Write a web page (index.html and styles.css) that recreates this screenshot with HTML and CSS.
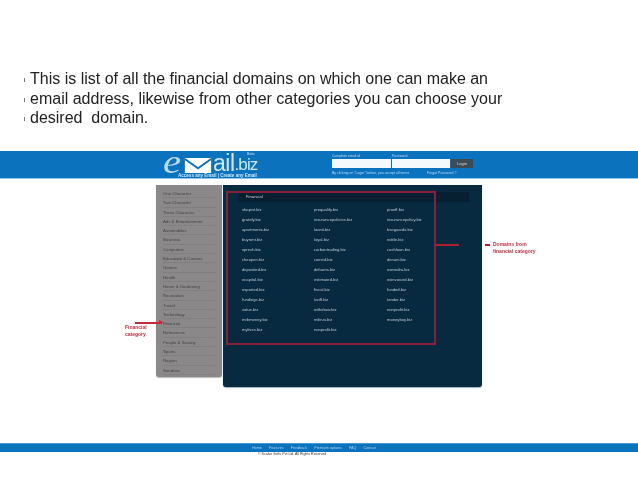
FILE: index.html
```html
<!DOCTYPE html>
<html lang="en">
<head>
<meta charset="utf-8">
<title>Financial domains</title>
<link rel="stylesheet" href="styles.css">
</head>
<body>
<main class="slide">
  <ul class="bullets">
    <li>This is list of all the financial domains on which one can make an</li>
    <li>email address, likewise from other categories you can choose your</li>
    <li>desired&nbsp; domain.</li>
  </ul>

  <section class="shot">
    <header class="site-header">
      <div class="header-inner">
        <div class="logo">
          <div class="logo-mark">
            <span class="logo-e">e</span>
            <svg class="logo-env" viewBox="0 0 28 16" aria-hidden="true">
              <rect width="28" height="16" fill="#fff"/>
              <path d="M0 1 L14 11 L28 1" fill="none" stroke="#0b72bd" stroke-width="2"/>
            </svg>
            <span class="logo-ail">ail</span><span class="logo-biz">.biz</span>
            <span class="logo-beta">Beta</span>
          </div>
          <div class="logo-tag">Access any Email | Create any Email</div>
        </div>
        <div class="login">
          <div class="login-labels"><span>Complete email id</span><span>Password</span></div>
          <div class="login-row">
            <div class="field"></div>
            <div class="field"></div>
            <div class="login-btn">Login</div>
          </div>
          <div class="login-notes"><span>By clicking on "Login" button, you accept all terms</span><span>Forgot Password ?</span></div>
        </div>
      </div>
    </header>

    <div class="content">
      <nav class="sidebar">
        <div class="cat">One Character</div>
        <div class="cat">Two Character</div>
        <div class="cat">Three Character</div>
        <div class="cat">Ads &amp; Entertainment</div>
        <div class="cat">Automobiles</div>
        <div class="cat">Business</div>
        <div class="cat">Computers</div>
        <div class="cat">Education &amp; Careers</div>
        <div class="cat">Games</div>
        <div class="cat">Health</div>
        <div class="cat">Home &amp; Gardening</div>
        <div class="cat">Recreation</div>
        <div class="cat">Travel</div>
        <div class="cat">Technology</div>
        <div class="cat">Financial</div>
        <div class="cat">References</div>
        <div class="cat">People &amp; Society</div>
        <div class="cat">Sports</div>
        <div class="cat">Region</div>
        <div class="cat">Sundries</div>
      </nav>
      <div class="panel">
        <div class="panel-title">Financial</div>
        <div class="domains">
          <span>shopist.biz</span><span>prequalify.biz</span><span>proeff.biz</span>
          <span>gratefy.biz</span><span>insurancepolicies.biz</span><span>insurancepolicy.biz</span>
          <span>apartments.biz</span><span>loanit.biz</span><span>bsoguards.biz</span>
          <span>buyrent.biz</span><span>loyal.biz</span><span>noble.biz</span>
          <span>spresh.biz</span><span>carbontrading.biz</span><span>cashloan.biz</span>
          <span>cheapen.biz</span><span>coined.biz</span><span>denarii.biz</span>
          <span>deposited.biz</span><span>dehams.biz</span><span>esmedra.biz</span>
          <span>ecapital.biz</span><span>estimated.biz</span><span>exinvoiced.biz</span>
          <span>exported.biz</span><span>fiscal.biz</span><span>funded.biz</span>
          <span>fundings.biz</span><span>tariff.biz</span><span>tender.biz</span>
          <span>value.biz</span><span>withdraw.biz</span><span>nonprofit.biz</span>
          <span>mrbmoney.biz</span><span>milirus.biz</span><span>moneyboy.biz</span>
          <span>mylives.biz</span><span>nonprofit.biz</span><span></span>
        </div>
      </div>
      <div class="red-box"></div>
      <div class="arrow-right"></div>
      <div class="note note-domains">Domains from<br>financial category</div>
      <div class="arrow-left"></div>
      <div class="note note-cat">Financial<br>category</div>
    </div>
  </section>

  <footer class="site-footer">
    <nav class="foot-links">
      <span>Home</span><span>Features</span><span>Feedback</span><span>Premium options</span><span>FAQ</span><span>Contact</span>
    </nav>
    <div class="copy">© Scalve Softs Pvt Ltd. All Rights Reserved</div>
  </footer>
</main>
</body>
</html>
```
FILE: styles.css
```css
* { box-sizing: border-box; }
html, body { margin: 0; background: #fff; }
body { font-family: "Liberation Sans", Arial, sans-serif; }
.slide { width: 638px; height: 479px; overflow: hidden; background: #fff; padding-top: 69px; }

.bullets { list-style: none; margin: 0; padding: 0 0 0 30px; font-size: 16px; line-height: 19.5px; color: #222; filter: blur(0.35px); }
.bullets li { position: relative; }
.bullets li::before { content: ""; position: absolute; left: -6px; top: 9px; width: 1px; height: 4px; background: #777; }

.shot { margin-top: 23.5px; }
.site-header { height: 28px; background: #0b72bd; border-bottom: 1px solid #8fc6ea; }
.header-inner { display: flex; padding-left: 163px; }
.logo { width: 169px; color: #fff; filter: blur(0.35px); }
.logo-mark { position: relative; display: flex; align-items: flex-end; height: 21px; }
.logo-e { font: italic 34px/21px "Liberation Serif", serif; color: #b9dbf1; width: 21px; height: 21px; transform: scaleX(1.2); transform-origin: left bottom; }
.logo-env { width: 28px; height: 15px; margin-bottom: -1px; }
.logo-ail { font-size: 23px; line-height: 18px; height: 18px; letter-spacing: -0.5px; color: #cfe6f6; margin-left: 1px; }
.logo-biz { font-size: 17px; line-height: 14px; height: 14px; letter-spacing: -0.9px; color: #cfe6f6; }
.logo-beta { position: absolute; left: 84px; top: 1px; font-size: 3.6px; line-height: 4px; color: #cfe6f6; }
.logo-tag { margin: 1px 0 0 15px; font-size: 4.55px; line-height: 5px; font-weight: 700; color: #cfe6f6; white-space: nowrap; }

.login { width: 150px; color: #bcdcf2; font-size: 3.5px; filter: blur(0.3px); padding-top: 3px; }
.login-labels { display: flex; line-height: 4px; }
.login-labels span:first-child { width: 60px; }
.login-row { display: flex; gap: 1px; margin-top: 1px; height: 9px; }
.field { width: 58.5px; background: #f4f9fc; }
.login-btn { width: 22px; background: #3d4b55; color: #d5dde2; font-size: 4px; line-height: 9px; text-align: center; }
.login-notes { display: flex; margin-top: 3px; line-height: 4px; white-space: nowrap; }
.login-notes span:first-child { width: 95px; }

.content { position: relative; display: flex; gap: 1px; margin: 6px 0 0 156px; width: 326px; height: 202px; }
.sidebar { width: 66px; height: 192px; padding: 4px 7px 0; background: #8a8889; border-radius: 0 0 3px 3px; box-shadow: 0 1px 1px #bbb; }
.cat { height: 9.3px; line-height: 9px; font-size: 4.3px; color: #454545; white-space: nowrap; border-bottom: 1px solid #817f80; filter: blur(0.3px); }
.panel { width: 259px; height: 202px; padding: 7px 13px 0 15px; background: #082a41; border-radius: 0 0 3px 3px; box-shadow: 0 1px 1px #9fb0bb; }
.panel-title { height: 10px; padding-left: 8px; background: #061f31; color: #c8d2d8; font-size: 4.2px; line-height: 10px; filter: blur(0.3px); }
.domains { display: grid; grid-template-columns: 72px 73px 1fr; grid-auto-rows: 10px; margin: 3px 0 0 4px; color: #b7c5cd; font-size: 4.15px; line-height: 10px; white-space: nowrap; filter: blur(0.3px); }

.red-box { position: absolute; left: 70px; top: 6px; width: 209.5px; height: 154px; border: 2px solid #8a2036; }
.arrow-right { position: absolute; left: 279px; top: 59px; width: 24px; height: 1.5px; background: #b01f30; }
.arrow-right::after { content: ""; position: absolute; left: 50px; top: 0; width: 5px; height: 1.5px; background: #b01f30; }
.note { position: absolute; color: #c22f40; font-size: 5px; font-weight: 700; line-height: 6.5px; white-space: nowrap; filter: blur(0.3px); }
.note-domains { left: 337px; top: 56px; }
.arrow-left { position: absolute; left: -21px; top: 137px; width: 27px; height: 1.5px; background: #c2293a; }
.arrow-left::after { content: ""; position: absolute; right: -1px; top: -2px; border-left: 4px solid #c2293a; border-top: 2.75px solid transparent; border-bottom: 2.75px solid transparent; }
.note-cat { left: -31px; top: 139px; }

.site-footer { margin-top: 55.5px; }
.foot-links { display: flex; height: 9px; padding-left: 252px; gap: 7.2px; background: #0b72bd; border-top: 1px solid #4a9ad3; color: #a9d2ee; font-size: 3.7px; line-height: 8px; filter: blur(0.25px); }
.copy { padding-left: 258px; font-size: 3.55px; line-height: 5px; color: #333; filter: blur(0.25px); }
```
